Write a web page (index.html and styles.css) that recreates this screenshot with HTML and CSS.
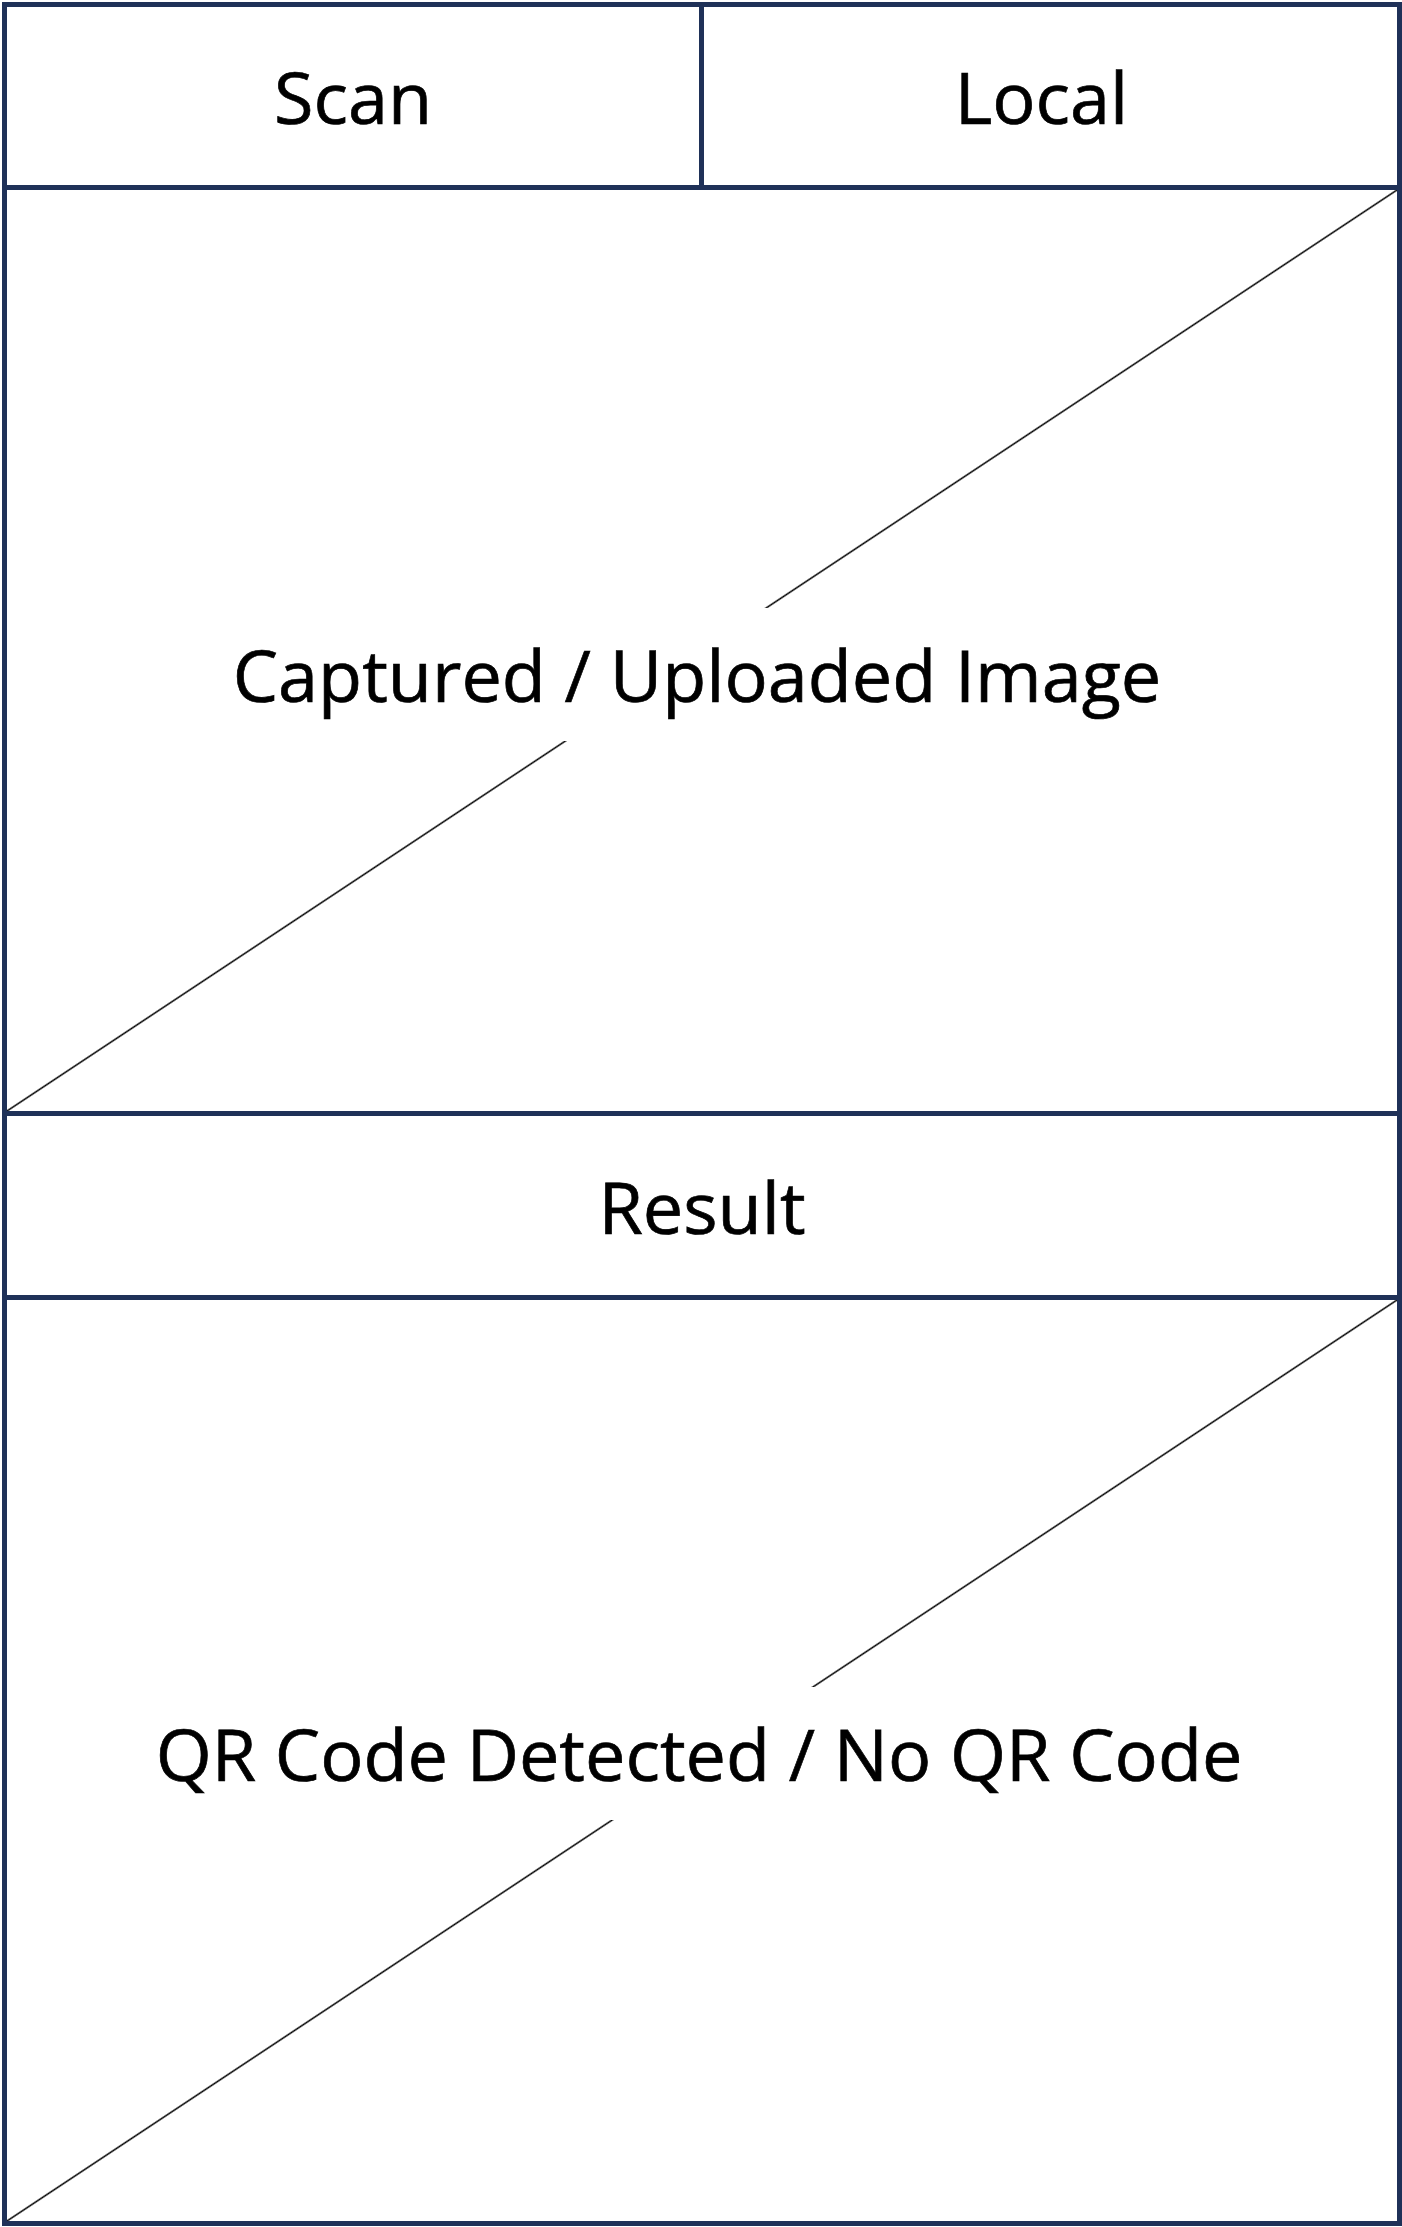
FILE: index.html
```html
<!DOCTYPE html>
<html lang="en">
<head>
<meta charset="UTF-8">
<meta name="viewport" content="width=device-width, initial-scale=1.0">
<title>QR Scanner Wireframe</title>
<link rel="stylesheet" href="styles.css">
</head>
<body>
<div class="frame">
    <div class="tabs">
        <div class="tab">Scan</div>
        <div class="tab">Local</div>
    </div>
    <div class="placeholder image-box">
        <span class="label">Captured / Uploaded Image</span>
    </div>
    <div class="result-title">Result</div>
    <div class="placeholder result-box">
        <span class="label">QR Code Detected / No QR Code</span>
    </div>
</div>
</body>
</html>
```

FILE: styles.css
```css
html, body {
    margin: 0;
    padding: 0;
    background-color: #ffffff;
    overflow: hidden;
}
body {
    font-family: "Open Sans", "Noto Sans", sans-serif;
    color: #000000;
    -webkit-text-stroke: 0.7px #000000;
}
.frame {
    box-sizing: border-box;
    width: 1400px;
    margin: 2px 0 0 2px;
    border: 5px solid #1f3158;
}
.tabs {
    display: grid;
    grid-template-columns: 697px 1fr;
    height: 183px;
    border-bottom: 5px solid #1f3158;
    box-sizing: border-box;
}
.tab {
    display: flex;
    align-items: center;
    justify-content: center;
    font-size: 72px;
    min-width: 0;
}
.tab:first-child {
    border-right: 5px solid #1f3158;
}
.tab:last-child {
    padding-right: 18px;
}
/* diagonal "placeholder" stroke from bottom-left to top-right */
.placeholder {
    box-sizing: border-box;
    height: 921px;
    display: flex;
    align-items: center;
    justify-content: center;
    background: linear-gradient(to bottom right,
        transparent calc(50% - 1.5px),
        #000000 50%,
        transparent calc(50% + 1.5px));
}
.image-box {
    padding-top: 48px;
    padding-right: 10px;
    border-bottom: 5px solid #1f3158;
    height: 926px;
}
.result-box {
    padding-bottom: 14px;
    padding-right: 6px;
}
.label {
    display: inline-block;
    background-color: #ffffff;
    font-size: 72px;
    line-height: 133px;
    white-space: nowrap;
}
.result-title {
    box-sizing: border-box;
    height: 184px;
    border-bottom: 5px solid #1f3158;
    display: flex;
    align-items: center;
    justify-content: center;
    font-size: 72px;
}
```
